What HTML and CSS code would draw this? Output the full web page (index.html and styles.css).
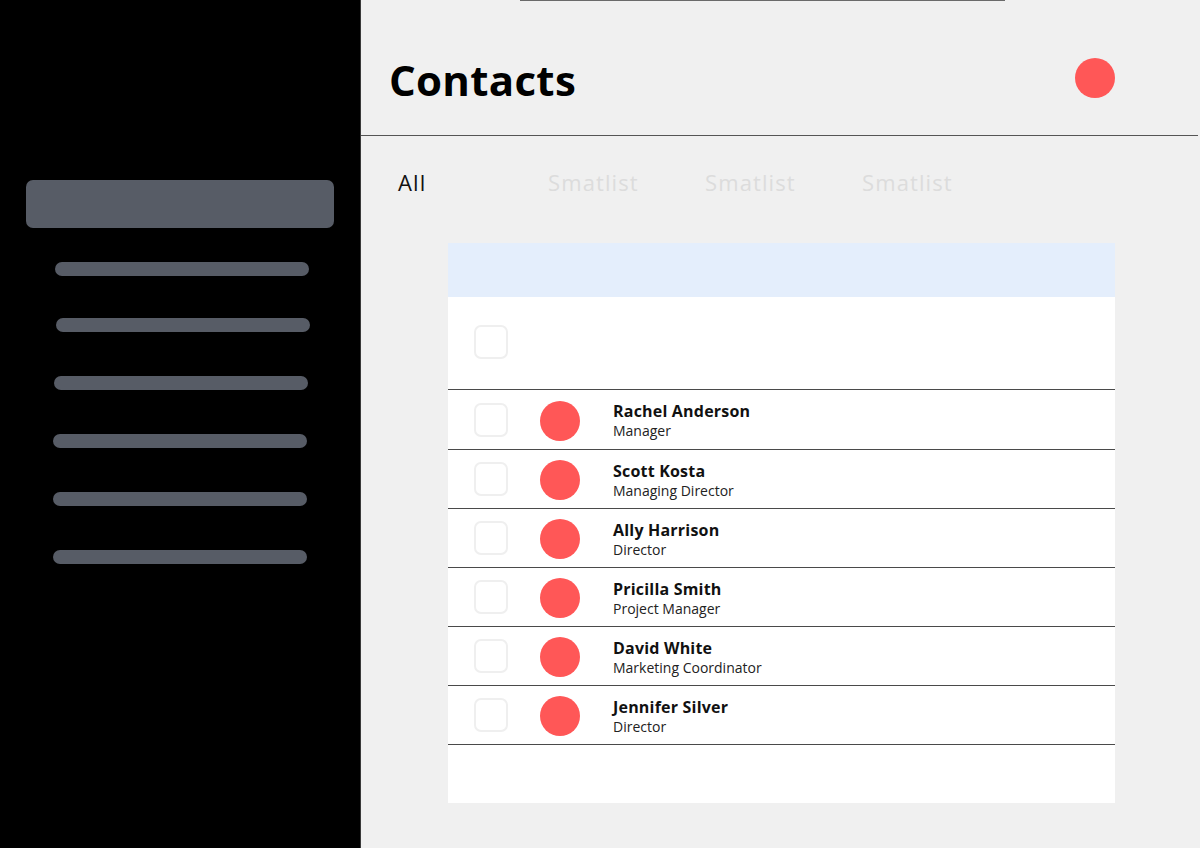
FILE: index.html
```html
<!DOCTYPE html>
<html lang="en">
<head>
<meta charset="utf-8">
<title>Contacts</title>
<link rel="stylesheet" href="styles.css">
</head>
<body>
<div class="app">
  <aside class="sidebar">
    <div class="nav-active"></div>
    <div class="nav-bars">
      <div class="nav-bar b1"></div>
      <div class="nav-bar b2"></div>
      <div class="nav-bar b3"></div>
      <div class="nav-bar b4"></div>
      <div class="nav-bar b4"></div>
      <div class="nav-bar b4"></div>
    </div>
  </aside>
  <main class="main">
    <div class="topline"></div>
    <header class="header">
      <h1 class="title">Contacts</h1>
      <div class="user-dot"></div>
    </header>
    <nav class="tabs">
      <span class="tab tab-active">All</span>
      <span class="tab">Smatlist</span>
      <span class="tab">Smatlist</span>
      <span class="tab">Smatlist</span>
    </nav>
    <section class="card">
      <div class="card-head"></div>
      <div class="select-row"><span class="check"></span></div>
      <div class="row row-first"><span class="check"></span><span class="avatar"></span><div class="info"><div class="name">Rachel Anderson</div><div class="role">Manager</div></div></div>
      <div class="row"><span class="check"></span><span class="avatar"></span><div class="info"><div class="name">Scott Kosta</div><div class="role">Managing Director</div></div></div>
      <div class="row"><span class="check"></span><span class="avatar"></span><div class="info"><div class="name">Ally Harrison</div><div class="role">Director</div></div></div>
      <div class="row"><span class="check"></span><span class="avatar"></span><div class="info"><div class="name">Pricilla Smith</div><div class="role">Project Manager</div></div></div>
      <div class="row"><span class="check"></span><span class="avatar"></span><div class="info"><div class="name">David White</div><div class="role">Marketing Coordinator</div></div></div>
      <div class="row"><span class="check"></span><span class="avatar"></span><div class="info"><div class="name">Jennifer Silver</div><div class="role">Director</div></div></div>
      <div class="card-foot"></div>
    </section>
  </main>
</div>
</body>
</html>
```

FILE: styles.css
```css
* { box-sizing: border-box; }
html, body { margin: 0; padding: 0; }
body {
  font-family: "Open Sans", "Liberation Sans", sans-serif;
  background: #f0f0f0;
  color: #111;
}
.app {
  display: flex;
  width: 1200px;
  height: 848px;
  overflow: hidden;
}
.sidebar {
  width: 360px;
  flex: none;
  background: #000;
  padding-top: 180px;
}
.nav-active {
  margin-left: 26px;
  width: 308px;
  height: 48px;
  border-radius: 7px;
  background: #575c66;
}
.nav-bars {
  display: flex;
  flex-direction: column;
  gap: 44px;
  margin-top: 34px;
}
.nav-bar {
  height: 14px;
  width: 254px;
  border-radius: 7px;
  background: #575c66;
}
.b1 { margin-left: 55px; margin-bottom: -2px; }
.b2 { margin-left: 56px; }
.b3 { margin-left: 54px; }
.b4 { margin-left: 53px; }

.main {
  flex: 1;
  background: #f0f0f0;
  border-left: 1px solid #3a3a3a;
}
.topline {
  height: 1px;
  width: 485px;
  margin-left: 159px;
  background: #6a6a6a;
}
.header {
  height: 135px;
  display: flex;
  align-items: flex-start;
  justify-content: space-between;
  padding: 0 83px 0 28px;
  border-bottom: 1px solid #555;
  margin-right: 2px;
}
.title {
  margin: 0;
  padding-top: 55px;
  font-size: 42px;
  font-weight: 700;
  line-height: 48px;
  letter-spacing: 0.3px;
  color: #000;
}
.user-dot {
  width: 40px;
  height: 40px;
  border-radius: 50%;
  background: #ff5757;
  margin-top: 57px;
}
.tabs {
  display: flex;
  align-items: center;
  height: 107px;
  padding: 0 0 16px 37px;
}
.tab {
  font-size: 22px;
  color: #dcdcdc;
  width: 157px;
  line-height: 30px;
  letter-spacing: 1.1px;
}
.tab-active {
  color: #111;
  width: 150px;
}
.card {
  margin-left: 87px;
  width: 667px;
  background: #fff;
}
.card-head {
  height: 54px;
  background: #e4eefc;
}
.select-row {
  height: 93px;
  display: flex;
  align-items: center;
  padding-left: 26px;
  padding-bottom: 2px;
  border-bottom: 1px solid #4a4a4a;
}
.check {
  width: 34px;
  height: 34px;
  flex: none;
  border: 2px solid #efefef;
  border-radius: 7px;
  background: #fff;
}
.row {
  height: 59px;
  display: flex;
  align-items: center;
  padding-left: 26px;
  border-bottom: 1px solid #4a4a4a;
}
.row-first {
  height: 60px;
}
.avatar {
  width: 40px;
  height: 40px;
  flex: none;
  border-radius: 50%;
  background: #ff5757;
  margin-left: 32px;
  margin-top: 2px;
}
.info {
  margin-left: 33px;
  padding-top: 2px;
}
.name {
  font-size: 16px;
  font-weight: 700;
  line-height: 20px;
  letter-spacing: 0.2px;
  color: #111;
}
.role {
  font-size: 14px;
  line-height: 19px;
  color: #222;
}
.card-foot {
  height: 58px;
}
```
